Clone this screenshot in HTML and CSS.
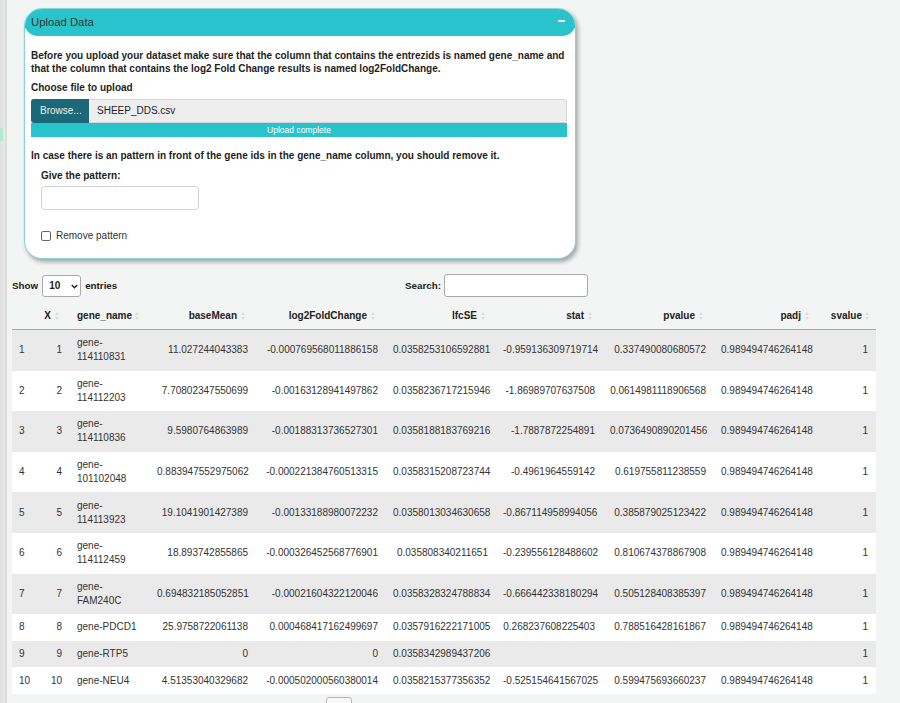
FILE: index.html
```html
<!DOCTYPE html>
<html>
<head>
<meta charset="utf-8">
<title>Upload Data</title>
<link rel="stylesheet" href="styles.css">
</head>
<body>
<div class="rail"><div class="rail-mark"></div></div>
<div class="main">
  <div class="box">
    <div class="box-header">
      <span class="box-title">Upload Data</span>
      <span class="collapse"></span>
    </div>
    <div class="box-body">
      <p class="note">Before you upload your dataset make sure that the column that contains the entrezids is named gene_name and that the column that contains the log2 Fold Change results is named log2FoldChange.</p>
      <div class="label">Choose file to upload</div>
      <div class="file-row">
        <span class="browse">Browse...</span>
        <span class="file-name">SHEEP_DDS.csv</span>
      </div>
      <div class="progress">Upload complete</div>
      <p class="note2">In case there is an pattern in front of the gene ids in the gene_name column, you should remove it.</p>
      <div class="indent">
        <div class="label">Give the pattern:</div>
        <input class="text-input" type="text">
        <label class="check"><input type="checkbox" class="cb"> <span>Remove pattern</span></label>
      </div>
    </div>
  </div>

  <div class="controls">
    <div class="length">
      <span>Show</span>
      <span class="select-wrap">
        <select class="select"><option>10</option></select>
        <svg class="chev" width="7" height="5" viewBox="0 0 7 5"><path d="M0.8 1 L3.5 3.8 L6.2 1" fill="none" stroke="#222" stroke-width="1.4"/></svg>
      </span>
      <span>entries</span>
    </div>
    <div class="filter">
      <span>Search:</span>
      <input class="search" type="text">
    </div>
  </div>

  <table class="dt">
    <colgroup>
      <col class="c0"><col class="c1"><col class="c2"><col class="c3"><col class="c4"><col class="c5"><col class="c6"><col class="c7"><col class="c8"><col class="c9">
    </colgroup>
    <thead>
      <tr>
        <th class="blank"></th>
        <th class="sort">X</th>
        <th class="sort left">gene_name</th>
        <th class="sort">baseMean</th>
        <th class="sort">log2FoldChange</th>
        <th class="sort">lfcSE</th>
        <th class="sort">stat</th>
        <th class="sort">pvalue</th>
        <th class="sort">padj</th>
        <th class="sort last">svalue</th>
      </tr>
    </thead>
    <tbody>
      <tr class="odd"><td>1</td><td class="num">1</td><td>gene-114110831</td><td class="num">11.027244043383</td><td class="num">-0.000769568011886158</td><td class="num">0.0358253106592881</td><td class="num">-0.959136309719714</td><td class="num">0.337490080680572</td><td class="num">0.989494746264148</td><td class="num">1</td></tr>
      <tr><td>2</td><td class="num">2</td><td>gene-114112203</td><td class="num">7.70802347550699</td><td class="num">-0.00163128941497862</td><td class="num">0.0358236717215946</td><td class="num">-1.86989707637508</td><td class="num">0.0614981118906568</td><td class="num">0.989494746264148</td><td class="num">1</td></tr>
      <tr class="odd"><td>3</td><td class="num">3</td><td>gene-114110836</td><td class="num">9.5980764863989</td><td class="num">-0.00188313736527301</td><td class="num">0.0358188183769216</td><td class="num">-1.7887872254891</td><td class="num">0.0736490890201456</td><td class="num">0.989494746264148</td><td class="num">1</td></tr>
      <tr><td>4</td><td class="num">4</td><td>gene-101102048</td><td class="num">0.883947552975062</td><td class="num">-0.000221384760513315</td><td class="num">0.0358315208723744</td><td class="num">-0.4961964559142</td><td class="num">0.619755811238559</td><td class="num">0.989494746264148</td><td class="num">1</td></tr>
      <tr class="odd"><td>5</td><td class="num">5</td><td>gene-114113923</td><td class="num">19.1041901427389</td><td class="num">-0.00133188980072232</td><td class="num">0.0358013034630658</td><td class="num">-0.867114958994056</td><td class="num">0.385879025123422</td><td class="num">0.989494746264148</td><td class="num">1</td></tr>
      <tr><td>6</td><td class="num">6</td><td>gene-114112459</td><td class="num">18.893742855865</td><td class="num">-0.000326452568776901</td><td class="num">0.035808340211651</td><td class="num">-0.239556128488602</td><td class="num">0.810674378867908</td><td class="num">0.989494746264148</td><td class="num">1</td></tr>
      <tr class="odd"><td>7</td><td class="num">7</td><td>gene-FAM240C</td><td class="num">0.694832185052851</td><td class="num">-0.00021604322120046</td><td class="num">0.0358328324788834</td><td class="num">-0.666442338180294</td><td class="num">0.505128408385397</td><td class="num">0.989494746264148</td><td class="num">1</td></tr>
      <tr><td>8</td><td class="num">8</td><td>gene-PDCD1</td><td class="num">25.9758722061138</td><td class="num">0.000468417162499697</td><td class="num">0.0357916222171005</td><td class="num">0.268237608225403</td><td class="num">0.788516428161867</td><td class="num">0.989494746264148</td><td class="num">1</td></tr>
      <tr class="odd"><td>9</td><td class="num">9</td><td>gene-RTP5</td><td class="num">0</td><td class="num">0</td><td class="num">0.0358342989437206</td><td class="num"></td><td class="num"></td><td class="num"></td><td class="num">1</td></tr>
      <tr><td>10</td><td class="num">10</td><td>gene-NEU4</td><td class="num">4.51353040329682</td><td class="num">-0.000502000560380014</td><td class="num">0.0358215377356352</td><td class="num">-0.525154641567025</td><td class="num">0.599475693660237</td><td class="num">0.989494746264148</td><td class="num">1</td></tr>
    </tbody>
  </table>

  <div class="paging">
    <span class="page-btn"></span>
  </div>
</div>
</body>
</html>
```

FILE: styles.css
```css
html, body {
  margin: 0;
  padding: 0;
}
body {
  display: flex;
  background: #f3f4f4;
  font-family: "Liberation Sans", Arial, sans-serif;
  color: #222;
  font-size: 10px;
  min-height: 703px;
}
.rail {
  width: 7px;
  flex: none;
  background: linear-gradient(to right, #dcdcdc 0, #e6e6e6 3px, #e8e8e8 5px, #d3d3d3 6px, #e6e6e6 7px);
}
.rail-mark {
  margin-top: 128px;
  width: 3px;
  height: 13px;
  background: #b2ebd4;
}
.main {
  flex: 1;
  padding-left: 5px;
  padding-top: 8px;
}

/* Upload box */
.box {
  margin-left: 12px;
  width: 550px;
  background: #fff;
  border: 1px solid #8ad4d7;
  border-radius: 18px;
  box-shadow: 2px 3px 4px rgba(0, 0, 0, 0.32);
  overflow: hidden;
}
.box-header {
  height: 28px;
  margin: -1px -1px 0 -1px;
  background: #29c4cb;
  border-radius: 14px;
  display: flex;
  align-items: center;
  justify-content: space-between;
  padding: 0 11px 0 7px;
}
.box-title {
  font-size: 11.3px;
  color: #333;
}
.collapse {
  width: 7px;
  height: 2px;
  background: #f2fbfb;
  margin-top: -2px;
}
.box-body {
  padding: 14px 8px 16px 6px;
}
.note {
  margin: 0;
  font-weight: bold;
  line-height: 12.5px;
  color: #1e1e1e;
}
.label {
  font-weight: bold;
  line-height: 12px;
  margin-top: 7px;
  color: #1e1e1e;
}
.file-row {
  margin-top: 5px;
  display: flex;
  height: 24px;
}
.browse {
  width: 58px;
  flex: none;
  box-sizing: border-box;
  background: #1a6878;
  color: #f0f0f0;
  padding-left: 9px;
  line-height: 24px;
  border-radius: 3px 0 0 3px;
}
.file-name {
  flex: 1;
  background: #eeeeee;
  border: 1px solid #d6d6d6;
  border-left: none;
  border-radius: 0 3px 3px 0;
  padding-left: 8px;
  line-height: 22px;
  color: #222;
}
.progress {
  height: 14px;
  background: #29c4cb;
  color: #fff;
  font-size: 8.5px;
  line-height: 14px;
  text-align: center;
}
.note2 {
  margin: 13px 0 0 0;
  font-weight: bold;
  line-height: 12px;
  color: #1e1e1e;
}
.indent {
  padding-left: 10px;
}
.indent .label {
  margin-top: 8px;
}
.text-input {
  display: block;
  margin: 4px 0 0 0;
  width: 158px;
  height: 24px;
  box-sizing: border-box;
  border: 1px solid #d2d2d2;
  border-radius: 4px;
  background: #fff;
}
.check {
  display: flex;
  align-items: center;
  gap: 5px;
  margin-top: 20px;
  line-height: 12px;
  color: #333;
}
.cb {
  appearance: none;
  margin: 0;
  width: 10px;
  height: 10px;
  border: 1px solid #666;
  border-radius: 2px;
  background: #fff;
}

/* table controls */
.controls {
  margin-top: 15px;
  display: grid;
  grid-template-columns: 393px auto;
  height: 23px;
  font-size: 9.8px;
  font-weight: bold;
  color: #222;
}
.length, .filter {
  display: flex;
  align-items: center;
}
.select-wrap {
  position: relative;
  margin: 0 4px 0 4px;
  display: inline-flex;
}
.select {
  appearance: none;
  width: 39px;
  height: 22px;
  border: 1px solid #aaa;
  border-radius: 3px;
  background: #fff;
  font-family: inherit;
  font-size: 10px;
  font-weight: bold;
  color: #222;
  padding: 0 0 0 6px;
  margin: 0;
}
.chev {
  position: absolute;
  left: 29px;
  top: 9px;
}
.search {
  margin: 0 0 0 3px;
  width: 144px;
  height: 23px;
  box-sizing: border-box;
  border: 1px solid #aaa;
  border-radius: 3px;
  background: #fff;
}

/* data table */
.dt {
  margin-top: 5px;
  width: 864px;
  table-layout: fixed;
  border-collapse: collapse;
  font-size: 10px;
  color: #333;
}
col.c0 { width: 25px; }
col.c1 { width: 33px; }
col.c2 { width: 80px; }
col.c3 { width: 106px; }
col.c4 { width: 130px; }
col.c5 { width: 110px; }
col.c6 { width: 107px; }
col.c7 { width: 111px; }
col.c8 { width: 106px; }
col.c9 { width: 56px; }

.dt th {
  position: relative;
  text-align: right;
  font-weight: bold;
  color: #222;
  line-height: 13px;
  padding: 7px 19px 7px 6px;
  border-bottom: 1px solid #a9a9a9;
  white-space: nowrap;
}
.dt th.left {
  text-align: left;
  padding-left: 7px;
}
.dt th.last {
  padding-right: 14px;
}
.dt th.sort::before,
.dt th.sort::after {
  content: "";
  position: absolute;
  right: 11px;
  width: 0;
  height: 0;
  border-left: 2px solid transparent;
  border-right: 2px solid transparent;
}
.dt th.sort::before {
  top: 10px;
  border-bottom: 3px solid #dcdcdc;
}
.dt th.sort::after {
  top: 15px;
  border-top: 3px solid #dcdcdc;
}
.dt th.last::before,
.dt th.last::after {
  right: 7px;
}
.dt td {
  padding: 6.3px 8px 6.3px 7px;
  line-height: 14px;
  vertical-align: middle;
  background: #fff;
}
.dt tr.odd td {
  background: #eaeaea;
}
.dt td.num {
  text-align: right;
}

.paging {
  margin-top: 3px;
  padding-left: 314px;
}
.page-btn {
  display: inline-block;
  width: 26px;
  height: 24px;
  box-sizing: border-box;
  border: 1px solid #b5b5b5;
  border-radius: 3px;
  background: #f8f8f8;
}
```
